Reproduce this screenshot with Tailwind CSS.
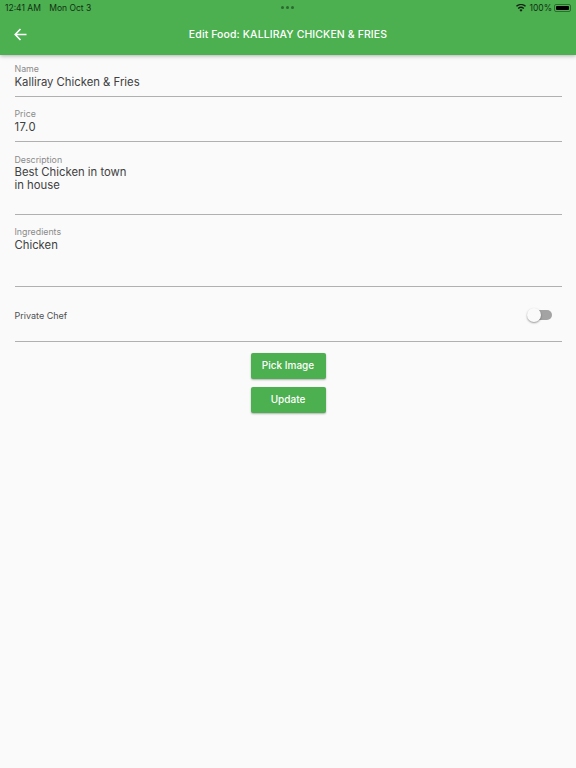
<!doctype html>
<html lang="en">
<head>
<meta charset="UTF-8" />
<title>Edit Food</title>
<script src="https://cdn.jsdelivr.net/npm/@tailwindcss/browser@4"></script>
</head>
<body class="bg-[#fafafa] font-['Inter',sans-serif] text-[#404040] h-[768px] overflow-hidden">
  <!-- app bar -->
  <header class="bg-[#4caf50] h-[54.500px] text-white shadow-[0_1px_4px_rgba(0,0,0,0.3)] relative">
    <div class="h-[14px] flex items-center justify-between px-[5px] pt-[2px] text-[8.500px] relative">
      <div class="flex gap-[8.500px] text-[#123214]">
        <span>12:41 AM</span>
        <span>Mon Oct 3</span>
      </div>
      <div class="absolute left-[281px] top-[6px] flex gap-[2px]">
        <span class="w-[3px] h-[3px] rounded-full bg-[#2a6b2e]"></span>
        <span class="w-[3px] h-[3px] rounded-full bg-[#2a6b2e]"></span>
        <span class="w-[3px] h-[3px] rounded-full bg-[#2a6b2e]"></span>
      </div>
      <div class="flex items-center gap-[2px] text-[#123214]">
        <svg class="mr-[1px]" width="10" height="8" viewBox="0 0 20 15" fill="#0c1f0d"><path d="M10 15 7 11.4a4.6 4.6 0 0 1 6 0zM5.4 9.5 3.500 7.300a10 10 0 0 1 13 0l-1.900 2.200a7 7 0 0 0-9.200 0zM1.800 5.200 0 3.100a15.300 15.300 0 0 1 20 0l-1.800 2.100a12.500 12.500 0 0 0-16.400 0z"/></svg>
        <span>100%</span>
        <span class="w-[17px] h-[8px] rounded-[2px] border border-[#2e6b31] p-[1px] flex"><span class="flex-1 bg-black rounded-[1px]"></span></span>
      </div>
    </div>
    <div class="h-[40px] flex items-center relative pt-[1px]">
      <svg class="ml-[14px]" width="13" height="13" viewBox="0 0 13 13" fill="none" stroke="white" stroke-width="1.600"><path d="M12.500 6.500H1.500M6.500 1 1.200 6.500 6.500 12"/></svg>
      <h1 class="absolute inset-x-0 top-[1px] text-center text-[10.500px] font-medium tracking-[0.1px] leading-[40px]">Edit Food: KALLIRAY CHICKEN &amp; FRIES</h1>
    </div>
  </header>

  <main class="px-[14.500px] pt-[8px]">
    <div class="h-[34px] border-b border-[#b0b0b0]">
      <div class="text-[8.800px] leading-[11px] text-[#8a8a8a]">Name</div>
      <div class="text-[11.300px] leading-[14px] pt-[1px]">Kalliray Chicken &amp; Fries</div>
    </div>
    <div class="mt-[11.500px] h-[34px] border-b border-[#b0b0b0]">
      <div class="text-[8.800px] leading-[11px] text-[#8a8a8a]">Price</div>
      <div class="text-[11.300px] leading-[14px] pt-[1px] tracking-[0.500px]">17.0</div>
    </div>
    <div class="mt-[11.500px] h-[61px] border-b border-[#b0b0b0]">
      <div class="text-[8.800px] leading-[11px] text-[#8a8a8a]">Description</div>
      <div class="text-[11.300px] leading-[13.800px] pt-[1px]">Best Chicken in town<br />in house</div>
    </div>
    <div class="mt-[11.500px] h-[61px] border-b border-[#b0b0b0]">
      <div class="text-[8.800px] leading-[11px] text-[#8a8a8a]">Ingredients</div>
      <div class="text-[11.300px] leading-[13.800px] pt-[1.500px]">Chicken</div>
    </div>
    <div class="h-[55px] border-b border-[#b0b0b0] flex items-center justify-between pt-[4px]">
      <span class="text-[9px] text-[#505050]">Private Chef</span>
      <div class="relative w-[25px] h-[16px] mr-[9.500px] -mt-[3px]">
        <div class="absolute right-0 top-[3px] w-[20px] h-[10px] rounded-full bg-[#a3a3a3]"></div>
        <div class="absolute left-0 top-[1px] w-[14px] h-[14px] rounded-full bg-[#fafafa] shadow-[0_1px_2px_rgba(0,0,0,0.4)]"></div>
      </div>
    </div>
    <div class="flex flex-col items-center gap-[8.500px] mt-[11px]">
      <button class="w-[75px] h-[25.500px] bg-[#4caf50] text-white text-[10px] font-medium rounded-[2px] shadow-[0_1px_2px_rgba(0,0,0,0.3)]">Pick Image</button>
      <button class="w-[75px] h-[25.500px] bg-[#4caf50] text-white text-[10px] font-medium rounded-[2px] shadow-[0_1px_2px_rgba(0,0,0,0.3)]">Update</button>
    </div>
  </main>
</body>
</html>
